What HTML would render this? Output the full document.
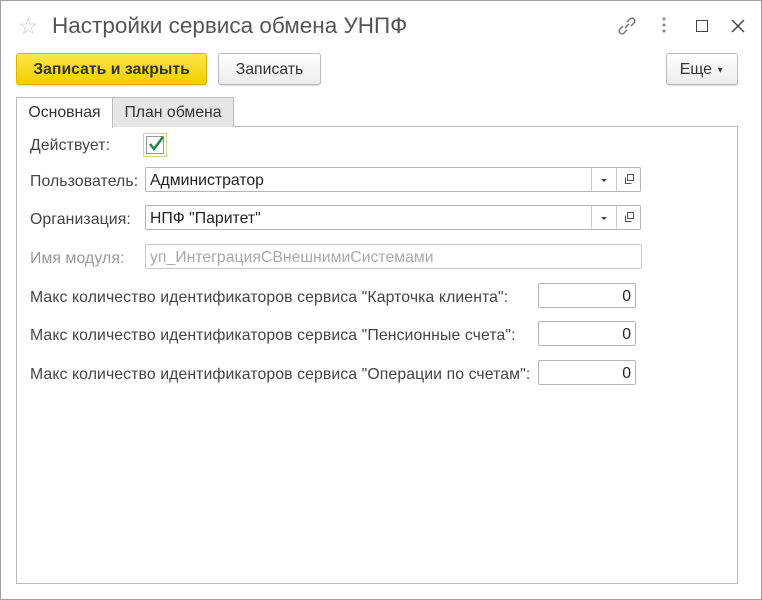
<!DOCTYPE html>
<html><head><meta charset="utf-8"><style>
body{margin:0;width:762px;height:600px;background:#fff;font-family:"Liberation Sans",sans-serif;position:relative;overflow:hidden}
.a{position:absolute}
.frame{left:0;top:0;width:760px;height:598px;border:1px solid #a0a0a0}
.btn{position:absolute;height:30px;border:1px solid #bbb;border-radius:3px;background:linear-gradient(#fff,#ececec);font-size:15.8px;line-height:31px;text-align:center;color:#333;box-shadow:0 1px 1px rgba(0,0,0,.15)}
.lbl{position:absolute;left:30px;font-size:15.8px;color:#444;letter-spacing:0.1px}
.inp{position:absolute;height:25px;border:1px solid #b5b5b5;border-radius:2px;background:#fff;font-size:15.8px;line-height:26px;padding-left:4px;box-sizing:border-box;color:#222}
.dd{position:absolute;top:0;width:25px;height:23px;border-left:1px solid #ccc}
</style></head><body>
<div class="a frame"></div>
<div class="a" style="left:18px;top:13px;font-size:23px;color:#ccc">☆</div>
<div class="a" style="left:52px;top:13px;font-size:22.5px;color:#555">Настройки сервиса обмена УНПФ</div>
<svg class="a" style="left:615px;top:14px" width="24" height="24" viewBox="0 0 24 24" fill="none" stroke="#777" stroke-width="1.5"><path d="M10 14l4-4M8 12l-3 3a2.5 2.5 0 0 0 4 4l3-3M16 12l3-3a2.5 2.5 0 0 0-4-4l-3 3"/></svg>
<svg class="a" style="left:660px;top:16px" width="8" height="18"><circle cx="4" cy="3" r="1.5" fill="#888"/><circle cx="4" cy="9" r="1.5" fill="#888"/><circle cx="4" cy="15" r="1.5" fill="#888"/></svg>
<div class="a" style="left:696px;top:20px;width:10px;height:10px;border:1.5px solid #444"></div>
<svg class="a" style="left:731px;top:19px" width="14" height="14" stroke="#444" stroke-width="1.5"><path d="M1 1l12 12M13 1L1 13"/></svg>
<div class="btn" style="left:16px;top:53px;width:189px;background:linear-gradient(#fde64a,#f3cc00);border-color:#d9b400;font-weight:bold;color:#333">Записать и закрыть</div>
<div class="btn" style="left:218px;top:53px;width:101px">Записать</div>
<div class="btn" style="left:666px;top:53px;width:70px">Еще <span style="font-size:8px;vertical-align:middle">▼</span></div>
<div class="a" style="left:16px;top:126px;width:720px;height:456px;border:1px solid #bbb"></div>
<div class="a" style="left:16px;top:97px;width:95px;height:30px;border:1px solid #bbb;border-bottom:none;background:#fff;font-size:15.8px;line-height:29px;text-align:center;color:#333">Основная</div>
<div class="a" style="left:112px;top:97px;width:120px;height:29px;border:1px solid #bbb;border-bottom:none;background:#e6e6e6;font-size:15.8px;line-height:29px;text-align:center;color:#333">План обмена</div>
<div class="lbl" style="top:137px">Действует:</div>
<div class="a" style="left:143px;top:133px;width:24px;height:24px;border:1px solid #e2d57a;box-sizing:border-box"></div>
<div class="a" style="left:146px;top:136px;width:18px;height:18px;border:1px solid #999;box-sizing:border-box"></div>
<svg class="a" style="left:147px;top:135px" width="18" height="18"><path d="M3 9l4 5 9-12" stroke="#1d8a4a" stroke-width="2.6" fill="none"/></svg>
<div class="lbl" style="top:173px">Пользователь:</div>
<div class="inp" style="left:145px;top:167px;width:496px">Администратор<div class="dd" style="left:445px"><svg width="25" height="23"><path d="M9 11h6l-3 3z" fill="#444"/></svg></div><div class="dd" style="left:470px"><svg width="25" height="23" fill="none" stroke="#555"><rect x="10.5" y="6.5" width="6" height="6"/><path d="M8.5 9.5v6h6"/></svg></div></div>
<div class="lbl" style="top:211px">Организация:</div>
<div class="inp" style="left:145px;top:205px;width:496px">НПФ "Паритет"<div class="dd" style="left:445px"><svg width="25" height="23"><path d="M9 11h6l-3 3z" fill="#444"/></svg></div><div class="dd" style="left:470px"><svg width="25" height="23" fill="none" stroke="#555"><rect x="10.5" y="6.5" width="6" height="6"/><path d="M8.5 9.5v6h6"/></svg></div></div>
<div class="lbl" style="top:250px;color:#999">Имя модуля:</div>
<div class="inp" style="left:145px;top:244px;width:497px;color:#aaa;border-color:#ccc">уп_ИнтеграцияСВнешнимиСистемами</div>
<div class="lbl" style="top:289px">Макс количество идентификаторов сервиса "Карточка клиента":</div>
<div class="inp" style="left:538px;top:283px;width:98px;text-align:right;padding-right:4px">0</div>
<div class="lbl" style="top:327px">Макс количество идентификаторов сервиса "Пенсионные счета":</div>
<div class="inp" style="left:538px;top:321px;width:98px;text-align:right;padding-right:4px">0</div>
<div class="lbl" style="top:366px">Макс количество идентификаторов сервиса "Операции по счетам":</div>
<div class="inp" style="left:538px;top:360px;width:98px;text-align:right;padding-right:4px">0</div>
</body></html>
